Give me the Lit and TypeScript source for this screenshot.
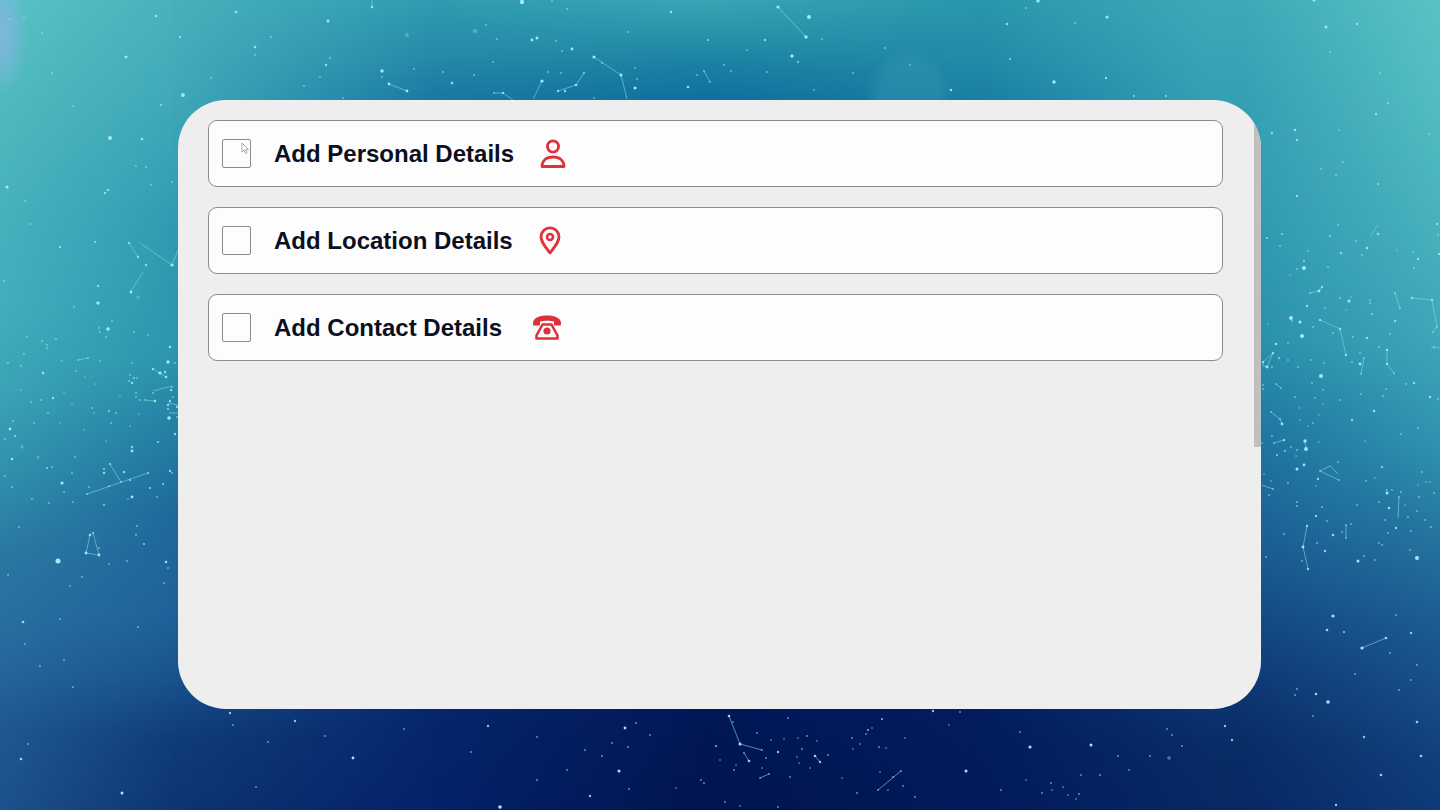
import { LitElement, html, svg, css } from "lit";
import { customElement, property } from "lit/decorators.js";

type Star = [x: number, y: number, r?: number];

const STARS: Star[] = [
  // upper left
  [10,19],[24,18],[42,33],[156,16,1.3],[236,12,1.3],[180,37,1.2],[126,57,1.5],[52,73],[255,47,1.3],[255,55],
  [328,21,1.5],[372,7,1.3],[326,65,1.2],[320,77],[211,78],[183,95,1.9],[161,105,1.1],[73,106],[382,71,1.7],
  [382,77],[414,69],[443,72],[452,83,1.3],[474,75],[389,84,1.4],[407,91,1.4],[343,98],[110,138,2.1],[142,139,1.3],
  [136,166],[146,167],[7,187,1.6],[108,190,1.2],[105,193,1.2],[172,182],[151,185],[25,201],[30,224],[60,247,1.2],
  [95,242,1.1],[129,243,1.2],[138,257,1.2],[172,265,1.6],[146,265,1.2],[271,37],[304,86],
  // top centre
  [522,2,2.2],[552,1],[567,9],[671,12,1.3],[778,7,1.6],[806,37,1.7],[809,17,2],[822,39],[628,32],[486,25],[497,39],
  [532,40,1.4],[537,38,1.5],[556,41],[562,51],[572,49,1.4],[493,62],[594,57,1.6],[602,63],[621,75,1.5],[708,40,1.1],
  [765,40,1.2],[747,50],[792,56,1.7],[798,62,1.1],[724,65],[731,71],[704,71],[697,75],[710,82],[767,72],[853,73],
  [885,48],[910,65],[951,90,1.3],[814,90],[688,87,1.3],[635,68],[637,79],[635,88,1.5],[548,72],[542,81,1.6],
  [561,73],[584,73,1.1],[576,85,1.3],[558,91,1.2],[565,91,1.2],[594,98],[494,93],[503,93,1.2],
  // upper right
  [1038,1,1.6],[1026,8],[1007,24,1.2],[1075,23],[1107,17,1.5],[1010,59,1.1],[1054,82,1.8],[1106,78,1.2],
  [1134,96,1.1],[1166,96,1.1],[1314,0,1.6],[1326,27,1.5],[1357,24,1.2],[1330,52],[1380,73],[1388,103,1.1],
  [1376,114,1.2],[1272,133,1.2],[1295,130,1.3],[1297,140,1.2],[1339,130],[1429,134],[1343,162],[1321,169],[1336,175],
  [1378,184,1.1],[1297,196,1.2],[1338,225],[1330,236,1.1],[1282,234,1.1],[1267,238,1.1],[1280,246],[1378,234,1.2],
  [1356,241],[1367,248,1.3],[1362,255],[1341,253,1.2],[1308,251],[1304,261,1.1],[1304,268,2],[1328,267],[1297,269],
  [1437,224,1.2],[1438,235],[1413,252],[1418,259,1.2],[1439,254,1.2],[1414,268],
  // left side
  [4,281],[98,286,1.2],[98,303,1.7],[74,307],[131,292,1.4],[112,321],[108,329,1.8],[99,328],[100,332],[106,337],
  [134,332],[148,335],[27,337],[42,341],[47,345],[47,348],[56,339],[24,354],[8,363],[21,366],[78,360],[88,358],
  [100,361],[43,373,1.3],[76,371],[170,347,1.3],[168,362,1.7],[175,363],[132,363],[153,369,1.2],[160,373,1.6],
  [165,372,1.2],[166,377,1.3],[130,375],[134,378,1.1],[137,378],[132,383,1.2],[129,381],[172,387],[171,390,1.2],
  [136,393],[136,397],[153,393],[140,400],[145,400],[155,401,1.3],[170,401,1.2],[173,397],[168,405,1.2],[177,407,1.2],
  [168,409,1.1],[169,418,1.8],[177,417],[175,434,1.2],[53,398,1.2],[41,400],[31,402],[48,413],[92,408],[109,411,1.1],
  [116,413],[111,423],[10,429,1.4],[13,421],[15,436,1.1],[5,439],[34,423],[12,459,1.3],[47,468,1.1],[52,467],
  [62,483,1.6],[64,492],[89,487],[72,473],[5,476],[12,487],[75,457],[132,447,1.2],[132,451,1.4],[158,442,1.1],
  [104,469,1.1],[104,473,1.2],[110,464,1.1],[121,482],[109,486],[124,472,1.2],[130,480,1.1],[148,473,1.1],
  [170,471,1.2],[172,473],[150,488,1.1],[163,484,1.1],[157,497],[132,497,1.4],[87,494],[104,505,1.1],[49,503],
  [32,499],[73,502],[19,527],[90,535,1.3],[93,533,1.1],[86,553,1.4],[99,555,1.4],[99,548],[58,561,2.5],[8,575],
  [70,586],[60,619],[23,622,1.3],[25,644],[40,666],[64,660],[73,687],[138,627],[28,744],[21,759,1.3],[122,793,1.5],
  [137,526],[136,535],[144,544,1.1],[166,562,1.3],[168,568],[164,583],[127,561],[109,564],[82,577],
  // right side
  [1322,287,1.2],[1319,291,1.4],[1310,293],[1307,306,1.2],[1291,318,2],[1300,322,1.5],[1302,336,2],[1292,321],
  [1325,308],[1340,298],[1349,301,1.5],[1370,300],[1370,303],[1372,314,1.1],[1395,293],[1400,308],[1395,321,1.2],
  [1412,298,1.2],[1432,300,1.2],[1437,327],[1433,332],[1320,320,1.2],[1340,329,1.2],[1346,355,1.2],[1333,333],
  [1313,327],[1353,337],[1367,338,1.2],[1390,334],[1379,347],[1387,350,1.2],[1387,364,1.2],[1394,373],[1364,358],
  [1361,374],[1360,353],[1352,362],[1360,364,1.4],[1434,347],[1276,344,1.3],[1288,343],[1273,353,1.2],[1263,362,1.2],
  [1267,367,1.4],[1279,358,1.1],[1272,367],[1288,360],[1298,367],[1311,360],[1324,363],[1321,376,2.1],[1312,383],
  [1276,384],[1281,388],[1263,385],[1263,389],[1323,390],[1361,394],[1386,389],[1414,383,1.2],[1406,384],[1383,396],
  [1430,397,1.3],[1438,399],[1374,411,1.3],[1352,420,1.2],[1340,400],[1315,398],[1295,397],[1271,412],[1280,419],
  [1282,424,1.4],[1313,423],[1401,434],[1418,428],[1272,436],[1284,440,1.2],[1274,443],[1305,441,1.7],[1306,449,1.9],
  [1285,451,1.1],[1277,455,1.1],[1291,447],[1297,450],[1297,469,1.5],[1304,465,1.4],[1318,479,1.2],[1320,471],
  [1339,480],[1338,462],[1382,467],[1366,481],[1422,472],[1288,483],[1273,489],[1269,495],[1297,502],[1297,506],
  [1322,507],[1316,516,1.2],[1357,505],[1379,502],[1387,493,1.5],[1387,490],[1392,490],[1389,508,1.3],[1401,492],
  [1399,497],[1419,497],[1417,511],[1434,493],[1408,517],[1385,520],[1396,528,1.2],[1388,533],[1411,531],[1431,527],
  [1425,520],[1307,526,1.2],[1303,547,1.4],[1302,561],[1308,569,1.2],[1284,534],[1317,543],[1325,551,1.2],
  [1333,535,1.3],[1342,532],[1346,525],[1346,538],[1351,524],[1327,521],[1358,561,1.5],[1364,556],[1375,560],
  [1382,545],[1379,543],[1417,558,2],[1410,550],[1266,557],[1333,616,1.6],[1327,630,1.3],[1344,632,1.1],
  [1362,648,1.6],[1386,638,1.3],[1390,653],[1396,615],[1411,633,1.2],[1417,665],[1355,674],[1411,680],[1399,690],
  [1297,689],[1295,695],[1316,694,1.3],[1328,702,1.8],[1313,716],[1417,722,1.3],[1364,737,1.2],[1421,756,1.3],
  [1381,775,1.3],[1336,805,1.2],
  // bottom
  [230,713,1.2],[233,725],[295,721,1.2],[268,742],[325,736],[353,758,1.4],[404,729],[488,726,1.2],[256,787],
  [471,752],[537,737],[567,770],[537,780],[500,807,1.8],[590,796,1.2],[619,771,1.5],[629,789],[585,750],[602,756],
  [612,743],[628,747],[625,728,1.4],[636,723],[650,735],[716,746,1.1],[729,716,1.3],[740,744,1.5],[762,750],
  [744,753],[749,761,1.3],[757,733],[778,752,1.2],[766,758],[802,749],[807,736],[788,718],[815,756,1.3],
  [820,762,1.2],[828,755],[734,770],[701,780],[704,783],[760,778],[769,774],[790,777],[778,807],[725,802],
  [857,793],[878,790],[893,777],[901,771],[903,786],[915,797],[866,734],[868,730,1.1],[882,719,1.1],[852,738],
  [879,747],[933,711,1.2],[960,712],[966,771,1.5],[1001,790],[1020,732],[1030,747,1.6],[1042,793],[1051,783],
  [1079,794],[1081,775],[1100,775],[1091,745,1.5],[1118,756],[1129,770],[1150,756],[1182,746],[1172,735],
  [1167,729],[1225,726,1.2],[1232,740,1.2],
];

const FAINT_STARS: Star[] = [
  [407,35,1.9],[475,31,2],[330,58,1.5],[138,297,1.7],[22,447,1.7],[38,457,1.6],[1169,758,1.8],[1382,467,1.6],
  [61,360],[95,384],[85,377],[64,393],[72,404],[94,413],[120,396],[130,426],[106,441],[139,414],[60,423],[84,430],
  [21,390],[128,499],[62,361],[1268,324],[1346,310],[1299,408],[1319,415],[1300,420],[1323,404],[1308,426],
  [1365,441],[1319,442],[1262,443],[1296,456],[1264,474],[1271,481],[1375,478],[1426,482],[1405,505],[1430,482],
  [1418,485],[1316,486],[733,722],[771,740],[784,739],[798,738],[817,741],[797,757],[799,763],[810,768],[720,760],
  [736,765],[762,768],[842,778],[872,728],[860,744],[853,749],[886,748],[905,738],[949,725],[888,790],[880,772],
  [1063,787],[1068,795],[1076,799],[1052,790],[1026,780],[740,806],[676,788],[1290,275],[1351,297],[1397,250],
];

const LINKS = [
  "M389 84 407 91", "M129 243 138 257", "M140 243 172 265 178 250", "M143 272 131 291", "M372 0V7",
  "M778 7 806 37", "M594 57 621 75 627 99", "M542 81 533 99", "M584 73 576 85 558 91", "M494 93H503L513 100",
  "M704 71 710 82", "M1378 225 1370 236", "M153 369 166 377", "M110 464 121 482", "M87 494 148 473",
  "M90 535 86 553 99 555 93 533", "M145 400 155 401", "M168 403 178 405", "M169 413H178", "M153 391 172 386",
  "M78 360 88 358", "M1310 293 1319 291 1322 287", "M1320 320 1340 329 1346 355", "M1395 293 1400 308",
  "M1412 298 1432 300 1437 327 1433 332", "M1387 350V364L1394 373", "M1364 358 1361 374", "M1431 347 1440 348",
  "M1263 362 1273 353 1267 367 1263 366Z", "M1276 384 1281 388", "M1271 412 1280 419 1282 424",
  "M1274 443 1284 440", "M1305 441 1306 449", "M1320 471 1339 480", "M1320 471 1330 466 1338 474",
  "M1262 485 1273 489", "M1307 526 1303 547 1308 569", "M1346 525V538", "M1399 497 1398 518",
  "M1362 648 1386 638", "M729 716 740 744 762 750", "M744 753 749 761", "M815 756 820 762",
  "M760 778 769 774", "M878 790 901 771",
];

const PERSON_ICON = svg`
  <svg class="icon" width="26" height="30" viewBox="0 0 26 30" aria-hidden="true">
    <g fill="none" stroke="currentColor" stroke-width="2.800">
      <circle cx="13" cy="7.500" r="5.600" />
      <path d="M2 27.500c0-6 4.500-9.500 11-9.500s11 3.500 11 9.500z" stroke-linejoin="round" />
    </g>
  </svg>`;

const PIN_ICON = svg`
  <svg class="icon" width="22" height="30" viewBox="0 0 22 30" aria-hidden="true">
    <g fill="none" stroke="currentColor">
      <path d="M11 27C6 20.500 2 16 2 10.800a9 9 0 0 1 18 0C20 16 16 20.500 11 27z" stroke-width="2.800" stroke-linejoin="round" />
      <circle cx="11" cy="11" r="3" stroke-width="2.600" />
    </g>
  </svg>`;

const PHONE_ICON = svg`
  <svg class="icon icon-wide" width="28" height="30" viewBox="0 0 28 30" aria-hidden="true">
    <path fill="currentColor" d="M0 10C0 5 6 2.500 14 2.500S28 5 28 10v1.500a1 1 0 0 1-1 1h-5a1 1 0 0 1-1-1V8.600C17 7.300 11 7.300 7 8.600v2.900a1 1 0 0 1-1 1H1a1 1 0 0 1-1-1z" />
    <path fill="none" stroke="currentColor" stroke-width="2.600" stroke-linejoin="round" d="M9.500 11.500h9l6 11v3h-21v-3z" />
    <circle cx="14" cy="18" r="3.600" fill="currentColor" />
  </svg>`;

const SECTIONS = [
  { id: "personal", label: "Add Personal Details", icon: PERSON_ICON },
  { id: "location", label: "Add Location Details", icon: PIN_ICON },
  { id: "contact", label: "Add Contact Details", icon: PHONE_ICON },
];

@customElement("starry-sky")
class StarrySky extends LitElement {
  static styles = css`
    :host { display: block; position: absolute; inset: 0; overflow: hidden; }
    .band, .stars, .glow { position: absolute; inset: 0; }
    .stars { width: 100%; height: 100%; }
    .band-1 { background: linear-gradient(#58c3c6, #50babf 12%, #48b3be 25%, #43aebc 38%, #3ba5b6 48%, #3292ad 58%, #2b79a3 68%, #276b9f 80%, #205893 90%, #1d518e); }
    .band-2 { background: linear-gradient(#48b1bc, #3fa9b8 12%, #2f9bb1 28%, #2b96ac 44%, #257fa3 53%, #1e6a9c 63%, #1e629a 76%, #19528c 84%, #103c79 91%, #0d3572);
      mask-image: linear-gradient(to right, transparent, black 12%); }
    .band-3 { background: linear-gradient(#2f9cb0, #2689a8 7%, #1a7aa3 12%, #125a90 50%, #06276c 87%, #04216a);
      mask-image: linear-gradient(to right, transparent 12%, black 30%); }
    .band-4 { background: linear-gradient(#39a5b4, #2994aa 4%, #1a80a3 8%, #10709e 12%, #0c5088 50%, #011857 87%, #01154f);
      mask-image: linear-gradient(to right, transparent 30%, black 49%); }
    .band-5 { background: linear-gradient(#2997ab, #228ba8 7%, #187da3 13%, #0c5088 50%, #021d5e 87%, #021a5a);
      mask-image: linear-gradient(to right, transparent 49%, black 68%); }
    .band-6 { background: linear-gradient(#3da9b7, #359fb3 12%, #2e98af 28%, #278faa 42%, #1e74a0 53%, #195e95 66%, #144984 76%, #0e3874 84%, #082c66 92%, #072863);
      mask-image: linear-gradient(to right, transparent 68%, black 84%); }
    .band-7 { background: linear-gradient(#58c3c5, #52bdc2 12%, #46b0bc 30%, #3ea6b8 42%, #3092af 55%, #25759f 66%, #1c5b93 77%, #184c88 86%, #113f7c 94%, #0f397a);
      mask-image: linear-gradient(to right, transparent 86%, black); }
    .glow { background:
      radial-gradient(ellipse 2% 8% at 0 4%, #78b8d8 30%, #78b8d800),
      radial-gradient(circle 44px at 909px 93px, #3596b070 65%, #3596b000); }
    .star { fill: #a5e6fa; }
    .faint { fill: #7bd0e4; opacity: 0.5; }
    .link { fill: none; stroke: #7fd8e0; stroke-width: 1; opacity: 0.6; }
  `;

  render() {
    return html`
      ${[1, 2, 3, 4, 5, 6, 7].map((n) => html`<div class="band band-${n}"></div>`)}
      <div class="glow"></div>
      <svg class="stars" viewBox="0 0 1440 810" preserveAspectRatio="xMidYMid slice" aria-hidden="true">
        ${LINKS.map((d) => svg`<path class="link" d=${d} />`)}
        ${FAINT_STARS.map(([x, y, r = 1]) => svg`<circle class="faint" cx=${x} cy=${y} r=${r} />`)}
        ${STARS.map(([x, y, r = 0.9]) => svg`<circle class="star" cx=${x} cy=${y} r=${r} opacity=${Math.min(1, r * 0.7)} />`)}
      </svg>
    `;
  }
}

@customElement("section-row")
class SectionRow extends LitElement {
  @property() name = "";
  @property() label = "";
  @property({ attribute: false }) icon: unknown;
  @property({ type: Boolean }) pointed = false;

  static styles = css`
    :host {
      display: flex;
      align-items: center;
      position: relative;
      box-sizing: border-box;
      height: 67px;
      padding: 0 13px;
      background: #fdfdfd;
      border: 1px solid #8b8b8b;
      border-radius: 9px;
    }
    .tick {
      appearance: none;
      flex: none;
      width: 29px;
      height: 29px;
      margin: 0;
      background: #fdfdfd;
      border: 1px solid #8b8b8b;
      border-radius: 2px;
    }
    .tick:checked { background: #e0313b; }
    .label {
      display: flex;
      align-items: center;
      gap: 26px;
      padding-left: 23px;
      color: #0c0f20;
      font: bold 24px/32px "Liberation Sans", Arial, sans-serif;
    }
    .icon { flex: none; color: #e0313b; }
    .icon-wide { margin-left: 5px; }
    .pointer { position: absolute; left: 32px; top: 21px; }
  `;

  render() {
    return html`
      <input class="tick" type="checkbox" id=${this.name} />
      <label class="label" for=${this.name}>${this.label}${this.icon}</label>
      ${this.pointed
        ? html`<svg class="pointer" width="9" height="13" viewBox="0 0 9 13" aria-hidden="true">
            <path d="M1 1v9l2-2 1.500 3.500 1.500-.7L4.700 7.500H7.500z" fill="#fff" stroke="#aaa" />
          </svg>`
        : ""}
    `;
  }
}

@customElement("app-root")
class AppRoot extends LitElement {
  static styles = css`
    :host {
      display: grid;
      position: relative;
      box-sizing: border-box;
      min-height: 100vh;
      padding: 100px 179px 101px 178px;
    }
    .panel {
      display: flex;
      position: relative;
      overflow: hidden;
      background: #eeeeee;
      border-radius: 48px;
    }
    .rows {
      flex: 1;
      display: flex;
      flex-direction: column;
      gap: 20px;
      padding: 20px 31px 20px 30px;
    }
    .scrollbar { width: 7px; }
    .thumb { height: 57%; background: #c0c0c0; }
  `;

  render() {
    return html`
      <starry-sky></starry-sky>
      <main class="panel">
        <div class="rows">
          ${SECTIONS.map(
            (s, i) => html`<section-row .name=${s.id} .label=${s.label} .icon=${s.icon} ?pointed=${i === 0}></section-row>`
          )}
        </div>
        <div class="scrollbar"><div class="thumb"></div></div>
      </main>
    `;
  }
}
